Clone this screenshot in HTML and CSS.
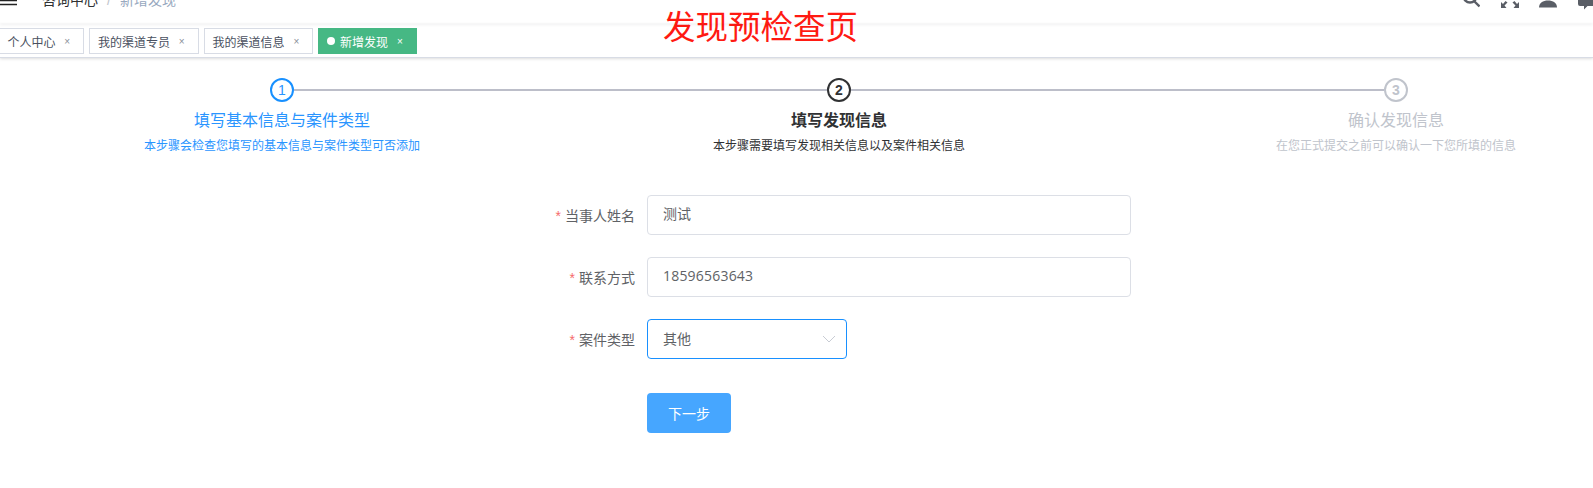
FILE: index.html
```html
<!DOCTYPE html>
<html lang="zh-CN">
<head>
<meta charset="utf-8">
<title>新增发现</title>
<link rel="stylesheet" href="styles.css">
</head>
<body>
<header class="navbar">
  <div class="nav-left">
    <svg class="hamburger" width="18" height="8" viewBox="0 0 18 8"><path d="M0 .5h17M0 4.5h17" stroke="#222" stroke-width="1.4" fill="none"/></svg>
    <nav class="crumbs"><span class="crumb">咨询中心</span><span class="sep">/</span><span class="crumb-now">新增发现</span></nav>
  </div>
  <div class="nav-right">
    <svg class="ico" width="19" height="10" viewBox="0 0 19 10"><circle cx="9" cy="-4" r="6.500" fill="none" stroke="#5a5e66" stroke-width="2.400"/><path d="M13.500 1.500l5 5" stroke="#5a5e66" stroke-width="2.400" fill="none"/></svg>
    <svg class="ico" width="19" height="10" viewBox="0 0 19 10"><path d="M1 8V2l2 2 2.500-3 2 1.500-3 3 2 2.500zM19 8V2l-2 2-2.500-3-2 1.500 3 3-2 2.500z" fill="#5a5e66"/></svg>
    <svg class="ico" width="19" height="10" viewBox="0 0 19 10"><path d="M0 7.500C0 3 4 .5 9 .5s9 2.500 9 7z" fill="#5a5e66"/></svg>
    <svg class="ico ico-last" width="19" height="10" viewBox="0 0 19 10"><path d="M0 0h19v4a2 2 0 0 1-2 2H9.500L6 9.500V6H2a2 2 0 0 1-2-2z" fill="#5a5e66"/></svg>
  </div>
</header>
<div class="tags">
  <a class="tag tag-first">个人中心<span class="close">×</span></a>
  <a class="tag">我的渠道专员<span class="close">×</span></a>
  <a class="tag">我的渠道信息<span class="close">×</span></a>
  <a class="tag tag-active"><i class="dot"></i>新增发现<span class="close">×</span></a>
</div>
<div class="overlay-title">发现预检查页</div>
<main>
  <section class="steps">
    <div class="step step-done">
      <span class="num">1</span>
      <h3>填写基本信息与案件类型</h3>
      <p>本步骤会检查您填写的基本信息与案件类型可否添加</p>
    </div>
    <div class="step step-current">
      <span class="num">2</span>
      <h3>填写发现信息</h3>
      <p>本步骤需要填写发现相关信息以及案件相关信息</p>
    </div>
    <div class="step step-todo">
      <span class="num">3</span>
      <h3>确认发现信息</h3>
      <p>在您正式提交之前可以确认一下您所填的信息</p>
    </div>
  </section>
  <form class="form">
    <div class="row">
      <label class="label"><b>*</b>当事人姓名</label>
      <div class="field">测试</div>
    </div>
    <div class="row">
      <label class="label"><b>*</b>联系方式</label>
      <div class="field field-num">18596563643</div>
    </div>
    <div class="row">
      <label class="label"><b>*</b>案件类型</label>
      <div class="field select">其他
        <svg width="14" height="8" viewBox="0 0 14 8"><path d="M1 1l6 6 6-6" stroke="#c8ccd4" stroke-width="1" fill="none"/></svg>
      </div>
    </div>
    <div class="row row-btn">
      <span class="label"></span>
      <button type="button" class="btn">下一步</button>
    </div>
  </form>
</main>
</body>
</html>
```
FILE: styles.css
```css
* { box-sizing: border-box; }
html, body { margin: 0; height: 100%; overflow: hidden; background: #fff; }
body {
  position: relative;
  font-family: "Liberation Sans", "Noto Sans CJK SC", sans-serif;
  color: #606266;
  font-size: 14px;
}
.navbar {
  height: 24px;
  display: flex;
  justify-content: space-between;
  overflow: hidden;
  box-shadow: 0 1px 3px rgba(0, 21, 41, .06);
  position: relative;
  z-index: 1;
}
.nav-left { display: flex; align-items: flex-start; }
.hamburger { flex: none; }
.crumbs {
  display: flex;
  gap: 9px;
  margin: -10px 0 0 24px;
  line-height: 20px;
  font-size: 14px;
}
.crumb { color: #303133; }
.sep { color: #c0c4cc; }
.crumb-now { color: #97a8be; }
.nav-right { display: flex; gap: 20px; align-items: flex-start; }
.ico { flex: none; }
.ico-last { margin-right: -4px; }
.tags {
  height: 34px;
  display: flex;
  gap: 5px;
  padding-top: 4px;
  align-items: flex-start;
  border-bottom: 1px solid #d8dce5;
  box-shadow: 0 1px 3px rgba(0, 0, 0, .12), 0 0 3px rgba(0, 0, 0, .04);
  position: relative;
}
.tag {
  height: 26px;
  display: flex;
  align-items: center;
  padding: 0 8px;
  font-size: 12px;
  color: #495060;
  border: 1px solid #d8dce5;
  background: #fff;
}
.tag-first { margin-left: -1.5px; }
.close { width: 15.5px; margin-left: 4px; text-align: center; color: #8a8f99; font-size: 10px; }
.tag-active { background: #46b884; border-color: #46b884; color: #fff; }
.tag-active .close { color: #fff; }
.dot { width: 8px; height: 8px; border-radius: 50%; background: #fff; margin-right: 5px; }
.overlay-title {
  position: absolute;
  left: 663px;
  top: 6px;
  font-size: 32.5px;
  line-height: 44px;
  color: #ff1a12;
  white-space: nowrap;
}
.steps {
  display: grid;
  grid-template-columns: repeat(3, 314px);
  column-gap: 243px;
  margin: 20px 0 0 125px;
}
.step { position: relative; text-align: center; display: flex; flex-direction: column; align-items: center; }
.num {
  width: 24px;
  height: 24px;
  border: 2px solid;
  border-radius: 50%;
  font-size: 14px;
  font-weight: 700;
  line-height: 20px;
  text-align: center;
  background: #fff;
}
.step-done .num { font-weight: 400; }
.step:not(:last-child)::after {
  content: "";
  position: absolute;
  top: 11px;
  left: calc(50% + 12px);
  width: 533px;
  height: 2px;
  background: #bcbec9;
}
.step h3 { margin: 7px 0 0; font-size: 16px; line-height: 24px; font-weight: 400; }
.step p { margin: 4px 0 0; font-size: 12px; line-height: 18px; }
.step-done { color: #2a95ff; }
.step-done .num { border-color: #1890ff; }
.step-current { color: #303133; }
.step-current h3 { font-weight: 700; }
.step-current .num { border-color: #303133; }
.step-todo { color: #c0c4cc; }
.step-todo .num { border-color: #c0c4cc; }
.form { margin-top: 40px; }
.row { display: flex; align-items: center; height: 40px; margin-bottom: 22px; }
.label { width: 635px; text-align: right; margin-right: 12px; color: #606266; flex: none; }
.label b { color: #f56c6c; font-weight: 400; margin-right: 4px; }
.field {
  width: 484px;
  height: 40px;
  border: 1px solid #dcdfe6;
  border-radius: 4px;
  padding: 0 15px;
  line-height: 36px;
  color: #606266;
}
.field-num { font-family: "Open Sans", "Noto Sans CJK SC", sans-serif; letter-spacing: .2px; }
.select {
  width: 200px;
  padding-right: 10px;
  border-color: #1890ff;
  display: flex;
  align-items: center;
  justify-content: space-between;
}
.row-btn { margin-top: 34px; }
.btn {
  width: 84px;
  height: 40px;
  border: 0;
  border-radius: 4px;
  background: #46a6ff;
  color: #fff;
  font: inherit;
  padding: 0;
}
```
